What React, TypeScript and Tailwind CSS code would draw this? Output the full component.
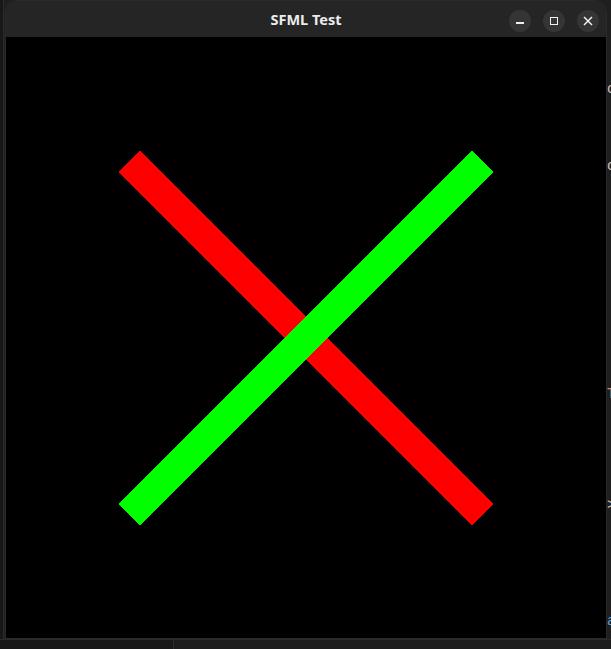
import React from 'react';

function WindowButton({ children }: { children: React.ReactNode }) {
  return (
    <div className="flex h-[22px] w-[22px] items-center justify-center rounded-full bg-[#353535]">
      {children}
    </div>
  );
}

export default function App() {
  return (
    <div className="relative h-[649px] w-[611px] overflow-hidden bg-[#1f1f1f] font-['Liberation_Mono',monospace]">
      {/* Editor behind the window */}
      <div className="flex h-full w-full flex-col">
        <div className="flex flex-1">
          <div className="w-[3px] bg-[#181818]" />
          <div className="w-px bg-[#2b2b2b]" />
          <div className="relative flex-1 text-[14px] leading-none">
            <span className="absolute left-[603px] top-[82px] text-[#c5c5c5]">c</span>
            <span className="absolute left-[603px] top-[159px] text-[#c5c5c5]">c</span>
            <span className="absolute left-[603px] top-[387px] text-[#ce9178]">T</span>
            <span className="absolute left-[603px] top-[498px] text-[#c5c5c5]">&gt;</span>
            <span className="absolute left-[603px] top-[614px] text-[#569cd6]">a</span>
            <span className="absolute left-[195px] top-[628px] whitespace-pre text-[12px] text-[#8a8a8a]">
              {'//   ' }<span>nrrrnnr rrrrrnnn  rrrnn  </span>
              <span className="text-[#3f78b0]">nnnnnn  nnnnnnnnnn n</span>
            </span>
          </div>
        </div>
        <div className="flex h-[10px] border-t border-[#2b2b2b]">
          <div className="w-[173px] bg-[#181818]" />
          <div className="flex-1 border-l border-[#2b2b2b] bg-[#1c1c1c]" />
        </div>
      </div>

      {/* SFML window */}
      <div className="absolute left-[6px] top-px flex h-[637px] w-[600px] flex-col overflow-hidden rounded-t-[12px] shadow-[0_0_0_1px_#2a2a2a]">
        <div className="relative flex h-[36px] items-center justify-center bg-[#252525]">
          <span className="pt-px font-['Noto_Sans',sans-serif] text-[14.5px] font-bold text-[#ececec]">
            SFML Test
          </span>
          <div className="absolute right-[7px] top-[9px] flex gap-[12px]">
            <WindowButton>
              <div className="mt-[3px] h-[2px] w-[8px] bg-[#f0f0f0]" />
            </WindowButton>
            <WindowButton>
              <div className="h-[8px] w-[8px] border-[1.5px] border-[#f0f0f0]" />
            </WindowButton>
            <WindowButton>
              <svg width="10" height="10" viewBox="0 0 10 10" fill="none" stroke="#f0f0f0" strokeWidth="1.5">
                <path d="M1 1l8 8M9 1l-8 8" />
              </svg>
            </WindowButton>
          </div>
        </div>
        <div className="flex-1 bg-black">
          <svg width="600" height="601" viewBox="0 0 600 601" shapeRendering="crispEdges">
            <rect x="50" y="286" width="500" height="30" fill="#ff0000" transform="rotate(45 300 301)" />
            <rect x="50" y="286" width="500" height="30" fill="#00ff00" transform="rotate(-45 300 301)" />
          </svg>
        </div>
      </div>
    </div>
  );
}
